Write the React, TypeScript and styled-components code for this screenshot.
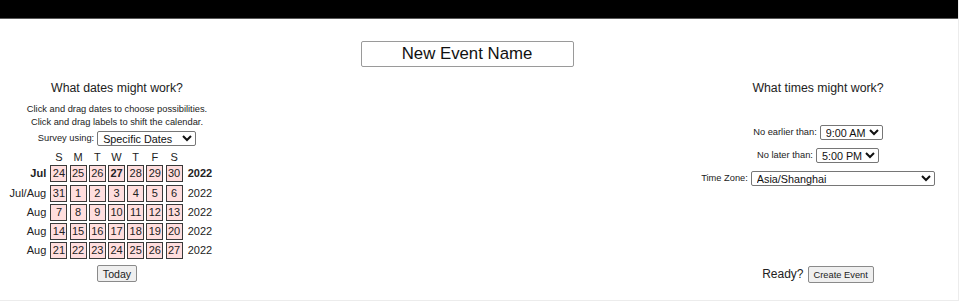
import styled, { createGlobalStyle } from 'styled-components';

const GlobalStyle = createGlobalStyle`
  html, body {
    margin: 0;
    padding: 0;
    background: #ffffff;
  }
  body {
    font-family: "Liberation Sans", Arial, sans-serif;
    color: #222222;
  }
`;

interface Week {
  label: string;
  days: number[];
  year: string;
  current?: boolean;
}

const weeks: Week[] = [
  { label: 'Jul', days: [24, 25, 26, 27, 28, 29, 30], year: '2022', current: true },
  { label: 'Jul/Aug', days: [31, 1, 2, 3, 4, 5, 6], year: '2022' },
  { label: 'Aug', days: [7, 8, 9, 10, 11, 12, 13], year: '2022' },
  { label: 'Aug', days: [14, 15, 16, 17, 18, 19, 20], year: '2022' },
  { label: 'Aug', days: [21, 22, 23, 24, 25, 26, 27], year: '2022' },
];

const weekdays = ['S', 'M', 'T', 'W', 'T', 'F', 'S'];

const App = () => {
  return (
    <>
      <GlobalStyle />
      <Page>
        <TopBar />
        <TitleInput defaultValue="New Event Name" />
        <Columns>
          <Column>
            <Heading>What dates might work?</Heading>
            <Hint>
              Click and drag dates to choose possibilities.
              <br />
              Click and drag labels to shift the calendar.
            </Hint>
            <SurveyRow>
              <Label>Survey using:</Label>
              <Select $width={99} defaultValue="dates">
                <option value="dates">Specific Dates</option>
                <option value="days">Days of the Week</option>
              </Select>
            </SurveyRow>
            <Calendar>
              <span />
              {weekdays.map((d, i) => (
                <WeekdayHead key={i}>{d}</WeekdayHead>
              ))}
              <span />
              {weeks.map((w, wi) => (
                <Week key={wi} week={w} />
              ))}
            </Calendar>
            <PlainButton $size={10.6}>Today</PlainButton>
          </Column>
          <Column $wide>
            <Heading>What times might work?</Heading>
            <TimeRows>
              <FieldRow>
                <Label>No earlier than:</Label>
                <Select $width={63} defaultValue="9">
                  <option value="9">9:00 AM</option>
                </Select>
              </FieldRow>
              <FieldRow>
                <Label>No later than:</Label>
                <Select $width={63} defaultValue="17">
                  <option value="17">5:00 PM</option>
                </Select>
              </FieldRow>
              <FieldRow>
                <Label>Time Zone:</Label>
                <Select $width={184} defaultValue="sh">
                  <option value="sh">Asia/Shanghai</option>
                </Select>
              </FieldRow>
            </TimeRows>
            <ReadyRow>
              <ReadyText>Ready?</ReadyText>
              <PlainButton $size={9.3}>Create Event</PlainButton>
            </ReadyRow>
          </Column>
        </Columns>
      </Page>
    </>
  );
};

const Week = ({ week }: { week: Week }) => (
  <>
    <MonthLabel $bold={week.current}>{week.label}</MonthLabel>
    {week.days.map((d, i) => (
      <DayCell key={i} $bold={week.current && d === 27}>
        {d}
      </DayCell>
    ))}
    <YearLabel $bold={week.current}>{week.year}</YearLabel>
  </>
);

const Page = styled.div`
  width: 958px;
  height: 300px;
  border-right: 1px solid #ececec;
  border-bottom: 1px solid #ececec;
  display: flex;
  flex-direction: column;
  align-items: center;
`;

const TopBar = styled.div`
  align-self: stretch;
  height: 18px;
  background: #000000;
  border-bottom: 1px solid #5a5a5a;
`;

// the name field sits a little left of the page centre in the original
const TitleInput = styled.input`
  box-sizing: border-box;
  margin: 22px 24px 0 0;
  width: 213px;
  height: 26px;
  border: 1px solid #9a9a9a;
  border-radius: 2px;
  padding: 0 4px;
  font-family: "Liberation Sans", Arial, sans-serif;
  font-size: 16.8px;
  color: #111111;
  text-align: center;
  outline: none;
`;

const Columns = styled.div`
  align-self: stretch;
  display: flex;
  justify-content: space-between;
  margin-top: 13px;
`;

const Column = styled.div<{ $wide?: boolean }>`
  width: ${(p) => (p.$wide ? 280 : 234)}px;
  display: flex;
  flex-direction: column;
  align-items: center;
`;

const Heading = styled.div`
  font-size: 12.3px;
  line-height: 16px;
  color: #222222;
`;

const Hint = styled.div`
  margin-top: 6.5px;
  font-size: 9.3px;
  line-height: 13px;
  text-align: center;
  color: #222222;
`;

const Label = styled.span`
  font-size: 9.3px;
  color: #222222;
`;

const FieldRow = styled.div`
  display: flex;
  align-items: center;
  gap: 3px;
  height: 16px;
`;

const SurveyRow = styled(FieldRow)`
  margin-top: 1.5px;
`;

const Select = styled.select<{ $width: number }>`
  box-sizing: border-box;
  width: ${(p) => p.$width}px;
  height: 15px;
  padding: 0 0 0 1px;
  border: 1px solid #767676;
  border-radius: 2px;
  background: #ffffff;
  font-family: "Liberation Sans", Arial, sans-serif;
  font-size: 10.8px;
  color: #111111;
`;

const Calendar = styled.div`
  margin-top: 6px;
  display: grid;
  grid-template-columns: 40px repeat(7, 17px) 40px;
  grid-template-rows: 11px repeat(5, 17px);
  column-gap: 2.2px;
  row-gap: 2.25px;
  margin-left: -1px;
`;

const WeekdayHead = styled.div`
  font-size: 11px;
  line-height: 11px;
  text-align: center;
  color: #222222;
`;

const MonthLabel = styled.div<{ $bold?: boolean }>`
  font-size: 11px;
  font-weight: ${(p) => (p.$bold ? 700 : 400)};
  line-height: 17px;
  text-align: right;
  padding-right: 2px;
  color: #222222;
`;

const YearLabel = styled.div<{ $bold?: boolean }>`
  font-size: 11px;
  font-weight: ${(p) => (p.$bold ? 700 : 400)};
  line-height: 17px;
  padding-left: 3px;
  color: #222222;
`;

const DayCell = styled.div<{ $bold?: boolean }>`
  box-sizing: border-box;
  border: 1px solid #3a3a3a;
  background: #ffdede;
  font-size: 11px;
  font-weight: ${(p) => (p.$bold ? 700 : 400)};
  line-height: 15px;
  text-align: center;
  color: #222222;
`;

const PlainButton = styled.button<{ $size: number }>`
  box-sizing: border-box;
  height: 17px;
  padding: 0 5px;
  margin-top: 6px;
  border: 1px solid #8a8a8a;
  border-radius: 2px;
  background: #efefef;
  font-family: "Liberation Sans", Arial, sans-serif;
  font-size: ${(p) => p.$size}px;
  color: #222222;
`;

const TimeRows = styled.div`
  margin-top: 28px;
  display: flex;
  flex-direction: column;
  align-items: center;
  gap: 7px;
`;

const ReadyRow = styled.div`
  margin-top: 74px;
  display: flex;
  align-items: center;
  gap: 4px;
`;

const ReadyText = styled.span`
  font-size: 12px;
  margin-top: 4px;
  color: #222222;
`;

export default App;
